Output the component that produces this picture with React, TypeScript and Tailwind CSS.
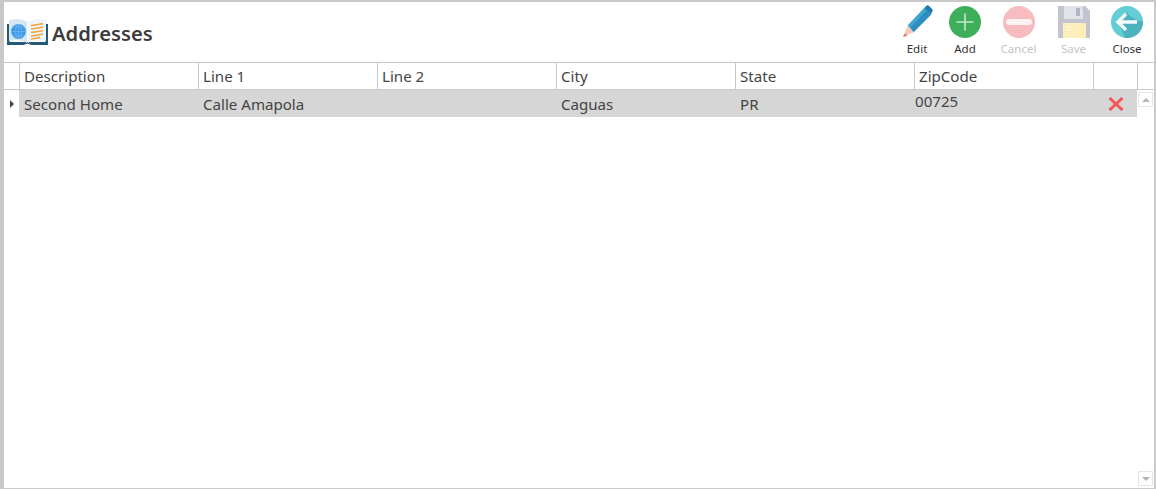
import React from 'react';

const columns = ['Description', 'Line 1', 'Line 2', 'City', 'State', 'ZipCode'];

const BookIcon = () => (
  <svg width="41" height="27" viewBox="0 0 41 27">
    <path d="M0 6h3v18h35V6h3v21H24.500l-4-1.500-4 1.500H0z" fill="#245a78" />
    <path d="M2 2.500 C8 0 15 0.500 20 4 V25 C15 22 8 21.500 2 23.500z" fill="#d6e7f0" />
    <path d="M39 2.500 C33 0 26 0.500 21 4 V25 C26 22 33 21.500 39 23.500z" fill="#edf6fa" />
    <circle cx="11.500" cy="13.500" r="7.500" fill="#3d9be9" />
    <path d="M4 13.500h15M11.500 6v15M6 9h11M6 18h11M11.500 6c-4 4-4 11 0 15M11.500 6c4 4 4 11 0 15" stroke="#7cc0f2" strokeWidth="0.600" fill="none" />
    <path d="M24 7.500 C28 7 32 6.500 36 5.500M24 11 C28 10.500 32 10 36 9M24 14.500 C28 14 32 13.500 36 12.500M24 18 C28 17.500 32 17 36 16M24 21 C27 20.500 30 20 33 19.500" stroke="#f0a33c" strokeWidth="1.300" fill="none" />
  </svg>
);

const PencilIcon = () => (
  <svg width="33" height="33" viewBox="0 0 34 34">
    <path d="M7 21 L24 3 L31 10 L13 28z" fill="#2a8fbf" />
    <path d="M7 21 L24 3 L26.500 5.500 L9.500 23.500z" fill="#3fa6d3" />
    <path d="M24 3 L26 1 C27 0 28 0 29 1 L32 4 C33 5 33 6 32 7 L31 10z" fill="#1f7ba8" />
    <path d="M7 21 L13 28 L2 33z" fill="#f3c9b8" />
    <path d="M4.200 29 L6.500 31.600 L2 33z" fill="#d9796d" />
  </svg>
);

const AddIcon = () => (
  <svg width="32" height="32" viewBox="0 0 32 32">
    <circle cx="16" cy="16" r="16" fill="#3fae5a" />
    <path d="M16 7.500v17M7.500 16h17" stroke="#c5e8cf" strokeWidth="1.600" />
  </svg>
);

const CancelIcon = () => (
  <svg width="32" height="32" viewBox="0 0 32 32">
    <circle cx="16" cy="16" r="16" fill="#f7bcc0" />
    <rect x="3" y="13" width="26" height="6" rx="3" fill="#fdf3f3" />
  </svg>
);

const SaveIcon = () => (
  <svg width="32" height="32" viewBox="0 0 32 32">
    <path d="M0 0H27L32 5V32H0z" fill="#c2c4cf" />
    <rect x="6" y="0" width="19" height="13" fill="#e2e3e9" />
    <rect x="18" y="2" width="4" height="8" fill="#b4b6c2" />
    <rect x="5" y="17" width="23" height="15" fill="#fbeeb8" />
    <path d="M8 21h8M8 24h5" stroke="#fdfbee" strokeWidth="1.200" />
  </svg>
);

const CloseIcon = () => (
  <svg width="32" height="32" viewBox="0 0 32 32">
    <circle cx="16" cy="16" r="16" fill="#64cdd6" />
    <path d="M16 7 L26 15H32 A16 16 0 0 1 14 31.900 L7 16z" fill="#4cb2bd" />
    <path d="M15 8 L7 16 L15 24M7 16H26" stroke="#f2fbfc" strokeWidth="3.500" fill="none" />
  </svg>
);

const ToolButton = ({ icon, label, width, disabled }: { icon: React.ReactNode; label: string; width: string; disabled?: boolean }) => (
  <div className={`flex flex-col items-center ${width}`}>
    <div className="h-[34px] flex items-end justify-center">{icon}</div>
    <span className={`text-[11.500px] leading-[16px] mt-[3px] ${disabled ? 'text-[#c4c4c4]' : 'text-[#333333]'}`}>{label}</span>
  </div>
);

export default function App() {
  return (
    <div
      className="w-[1156px] h-[489px] overflow-hidden bg-white flex flex-col border-t-2 border-l-[4px] border-r-2 border-b border-[#c9c9c9] text-[#404040]"
      style={{ fontFamily: '"Noto Sans", "Open Sans", sans-serif' }}
    >
      {/* ヘッダー */}
      <div className="h-[60px] shrink-0 flex items-center justify-between">
        <div className="flex items-center ml-[3px] mt-[2px] gap-[4px]">
          <div className="mb-[3px]">
            <BookIcon />
          </div>
          <h1 className="text-[20.200px] font-semibold text-[#3c3c3c] leading-none">Addresses</h1>
        </div>
        <div className="flex items-start self-start mt-[2px]">
          <ToolButton icon={<PencilIcon />} label="Edit" width="w-[46px]" />
          <ToolButton icon={<AddIcon />} label="Add" width="w-[50px]" />
          <ToolButton icon={<CancelIcon />} label="Cancel" width="w-[57px]" disabled />
          <ToolButton icon={<SaveIcon />} label="Save" width="w-[53px]" disabled />
          <ToolButton icon={<CloseIcon />} label="Close" width="w-[54px]" />
        </div>
      </div>

      {/* テーブル */}
      <div className="grid grid-cols-[16px_repeat(6,179px)_44px_1fr] h-[28px] shrink-0 border-y border-[#c9c9c9] text-[15.100px] text-[#444444]">
        <div className="border-r border-[#c9c9c9]" />
        {columns.map((c) => (
          <div key={c} className="border-r border-[#c9c9c9] pl-[4px] leading-[27px]">{c}</div>
        ))}
        <div className="border-r border-[#c9c9c9]" />
        <div />
      </div>
      <div className="flex-1 flex min-h-0">
        <div className="w-[1133px] shrink-0">
          <div className="grid grid-cols-[15px_180px_repeat(5,179px)_1fr] h-[27px] text-[15.100px] text-[#444444]">
            <div className="flex items-center justify-center bg-white">
              <span className="w-0 h-0 border-y-[4px] border-y-transparent border-l-[4px] border-l-[#444444]" />
            </div>
            <div className="bg-[#d6d6d6] pl-[5px] pt-[1px] leading-[26px]">Second Home</div>
            {['Calle Amapola', '', 'Caguas', 'PR'].map((v, i) => (
              <div key={i} className="bg-[#d6d6d6] pl-[4px] pt-[1px] leading-[26px]">{v}</div>
            ))}
            <div className="bg-[#d6d6d6] leading-[22px]">00725</div>
            <div className="bg-[#d6d6d6] flex items-center justify-center">
              <svg width="16" height="14" viewBox="0 0 16 14">
                <path d="M1.500 1 L14.500 13M14.500 1 L1.500 13" stroke="#f4545c" strokeWidth="3" />
              </svg>
            </div>
          </div>
        </div>
        <div className="flex-1 flex flex-col justify-between items-center py-[2px]">
          <div className="w-[15px] h-[15px] border border-[#e6e6e6] flex items-center justify-center">
            <span className="w-0 h-0 border-x-[4px] border-x-transparent border-b-[4px] border-b-[#b5b5b5]" />
          </div>
          <div className="w-[15px] h-[15px] border border-[#e6e6e6] flex items-center justify-center">
            <span className="w-0 h-0 border-x-[4px] border-x-transparent border-t-[4px] border-t-[#b5b5b5]" />
          </div>
        </div>
      </div>
    </div>
  );
}
